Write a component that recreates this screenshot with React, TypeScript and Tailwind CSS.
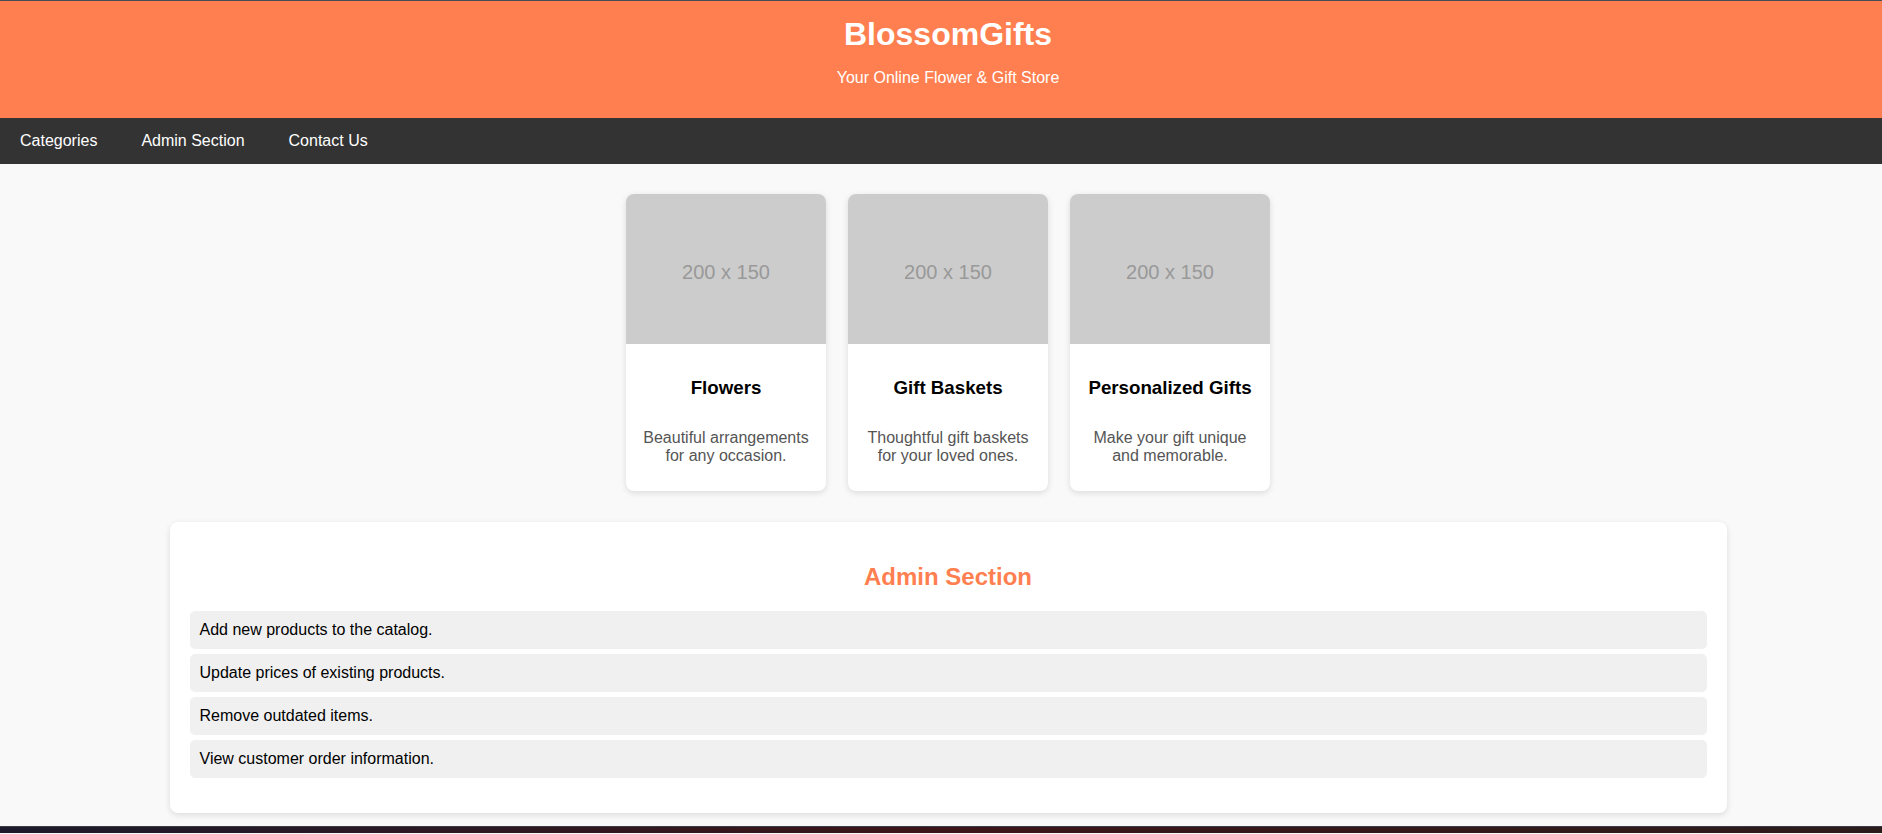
import React from 'react';

const categories = [
  { title: 'Flowers', desc: 'Beautiful arrangements for any occasion.' },
  { title: 'Gift Baskets', desc: 'Thoughtful gift baskets for your loved ones.' },
  { title: 'Personalized Gifts', desc: 'Make your gift unique and memorable.' },
];

const adminTasks = [
  'Add new products to the catalog.',
  'Update prices of existing products.',
  'Remove outdated items.',
  'View customer order information.',
];

const navLinks = ['Categories', 'Admin Section', 'Contact Us'];

export default function App() {
  return (
    <div className="w-full h-[834px] overflow-hidden bg-[#f9f9f9] font-['Liberation_Sans',Arial,sans-serif] text-black">
      <div className="w-[1896px]">
        <header className="border-t border-[#474c55] bg-[#ff7f50] text-white text-center py-[15px]">
          <h1 className="text-[32px] font-bold leading-[37px]">BlossomGifts</h1>
          <p className="my-[16px] text-[16px] leading-[18.4px]">Your Online Flower &amp; Gift Store</p>
        </header>

        <nav className="bg-[#333333] h-[46px] flex items-center gap-[4px]">
          {navLinks.map((link) => (
            <a key={link} href="#" className="px-[20px] text-white text-[16px] leading-[18px]">
              {link}
            </a>
          ))}
        </nav>

        <section className="pt-[30px] flex justify-center gap-[22px]">
          {categories.map((cat) => (
            <div
              key={cat.title}
              className="w-[200px] bg-white rounded-[8px] overflow-hidden shadow-[0_2px_6px_rgba(0,0,0,0.12)]"
            >
              <div className="h-[150px] pt-[5px] bg-[#cccccc] flex items-center justify-center text-[#999999] text-[20px]">
                200 x 150
              </div>
              <div className="px-[15px] pt-[33px] pb-[25px] text-center">
                <h3 className="text-[18.72px] font-bold leading-[21.5px] text-black">{cat.title}</h3>
                <p className="mt-[30px] text-[16px] leading-[18.4px] text-[#555555]">{cat.desc}</p>
              </div>
            </div>
          ))}
        </section>

        <section className="mt-[31px] mx-auto w-[1557px] p-[20px] bg-white rounded-[8px] shadow-[0_2px_6px_rgba(0,0,0,0.12)]">
          <h2 className="mt-[21px] text-[24px] font-bold leading-[27.6px] text-[#ff7f50] text-center">
            Admin Section
          </h2>
          <ul className="mt-[21px] mb-[15px]">
            {adminTasks.map((task, i) => (
              <li
                key={task}
                className={`bg-[#f0f0f0] p-[10px] text-[16px] leading-[18px] rounded-[5px] ${
                  i < adminTasks.length - 1 ? 'mb-[5px]' : ''
                }`}
              >
                {task}
              </li>
            ))}
          </ul>
        </section>
      </div>

      <div className="mt-[13px] h-[7px] w-full border-t border-[#3c3c46] bg-gradient-to-r from-[#1c1a2b] via-[#3b1518] to-[#2b1c1c]" />
    </div>
  );
}
